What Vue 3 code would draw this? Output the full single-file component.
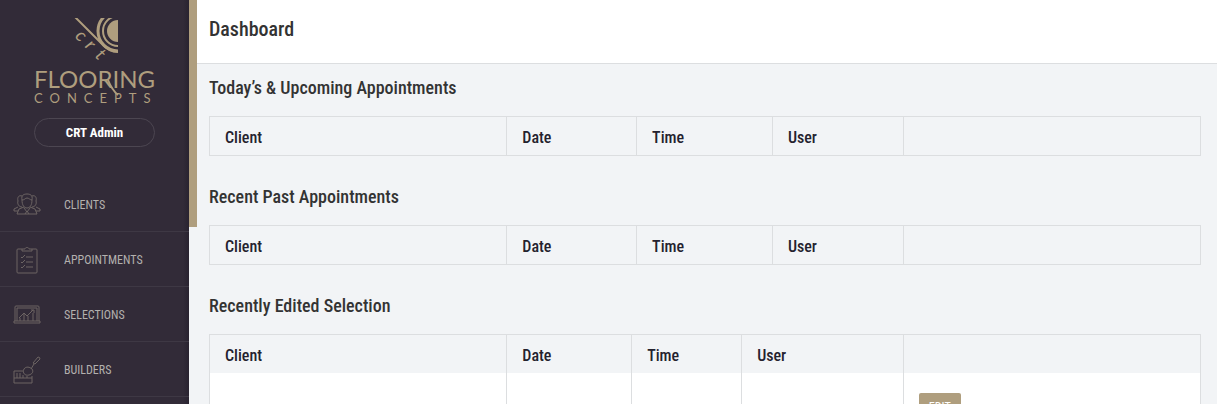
<template>
  <div class="layout">
    <aside class="sidebar">
      <div class="sidebar-body">
        <svg class="logo" viewBox="0 0 131 96" role="img" aria-label="CRT Flooring Concepts">
          <defs>
            <clipPath id="logo-clip"><rect x="40" y="5" width="49" height="40" /></clipPath>
          </defs>
          <g clip-path="url(#logo-clip)">
            <circle class="logo-fill" cx="89" cy="18" r="11" />
            <circle class="logo-ring" cx="89" cy="18" r="15" />
            <circle class="logo-ring wide" cx="89" cy="18" r="20" />
            <path class="logo-line" d="M46 4 L73 31 Q80 39 90 39" />
          </g>
          <text class="logo-crt" transform="translate(51 24) rotate(44)" x="0 13 27" y="4">crt</text>
          <text class="logo-name" x="5" y="75">FLOORING</text>
          <path class="logo-leg" d="M79 67 Q83 77 89 82" />
          <text class="logo-sub" x="5" y="90">CONCEPTS</text>
        </svg>
        <button type="button" class="account">CRT Admin</button>
        <nav class="menu">
          <a v-for="item in menu" :key="item.label" href="#" class="menu-item">
            <svg class="menu-icon" viewBox="0 0 28 28" aria-hidden="true">
              <path v-for="d in item.paths" :key="d" :d="d" />
            </svg>
            <span>{{ item.label }}</span>
          </a>
        </nav>
      </div>
      <div class="scroll-track"><div class="scroll-thumb"></div></div>
    </aside>

    <main class="content">
      <header class="page-header">
        <h1>Dashboard</h1>
      </header>
      <section v-for="section in sections" :key="section.title" class="section">
        <h2>{{ section.title }}</h2>
        <table>
          <colgroup>
            <col v-for="(width, i) in section.widths" :key="i" :style="{ width: width + '%' }">
            <col>
          </colgroup>
          <thead>
            <tr>
              <th v-for="column in columns" :key="column">{{ column }}</th>
              <th></th>
            </tr>
          </thead>
          <tbody v-if="section.rows">
            <tr v-for="row in section.rows" :key="row">
              <td v-for="column in columns" :key="column"></td>
              <td><button type="button" class="edit">EDIT</button></td>
            </tr>
          </tbody>
        </table>
      </section>
    </main>
  </div>
</template>

<script setup>
const columns = ['Client', 'Date', 'Time', 'User']

const sections = [
  { title: 'Today’s & Upcoming Appointments', widths: [30, 13.1, 13.7, 13.2] },
  { title: 'Recent Past Appointments', widths: [30, 13.1, 13.7, 13.2] },
  { title: 'Recently Edited Selection', widths: [30, 12.6, 11.1, 16.3], rows: 1 },
]

const menu = [
  {
    label: 'CLIENTS',
    paths: [
      'M9 9 C8 4 11 3 14 3 C17 3 20 4 19 9 C19 14 17 17 14 17 C11 17 9 14 9 9 Z',
      'M9 9 C12 9 12 7 14 7 C16 7 17 9 19 9',
      'M9 5 C6 4 4 6 5 10 C4 13 6 16 9 16 M19 5 C22 4 24 6 23 10 C24 13 22 16 19 16',
      'M11 16 L6 18 L4 23 H24 L22 18 L17 16 M11 17 L14 21 L17 17 M12 23 L14 20 L16 23',
      'M5 16 L1 18 V20 H5 M23 16 L27 18 V20 H23',
    ],
  },
  {
    label: 'APPOINTMENTS',
    paths: [
      'M9 3 H5 Q4 3 4 4 V26 Q4 27 5 27 H23 Q24 27 24 26 V4 Q24 3 23 3 H19',
      'M9 5 V3 H12 C12 1 16 1 16 3 H19 V5 Z',
      'M8 11 L9 12 L12 9 M13 11 H20',
      'M8 16 L9 17 L12 14 M13 16 H20',
      'M8 21 L9 22 L12 19 M13 21 H20',
    ],
  },
  {
    label: 'SELECTIONS',
    paths: [
      'M2 20 V6 Q2 5 3 5 H25 Q26 5 26 6 V20',
      'M4 20 V7 H24 V20',
      'M1 20 H27 V22 H1 Z',
      'M6 17 L11 12 L14 15 L20 9 M18 9 H21 V12',
      'M7 17 V20 M11 13 V20 M15 15 V20 M20 12 V20',
    ],
  },
  {
    label: 'BUILDERS',
    paths: [
      'M10 15 H1 V27 H19 V20 M1 22 H19',
      'M4 17 V22 M7 17 V22 M10 19 V22 M14 20 V22',
      'M11 13 C13 10 17 11 19 13 C21 16 19 18 16 19 C12 20 9 17 11 13 Z',
      'M18 13 L21 8 M20 7 L25 1 Q27 1 27 3 L22 8 Z',
    ],
  },
]
</script>

<style>
body {
  margin: 0;
  overflow: hidden;
}
</style>

<style scoped>
.layout {
  display: flex;
  height: 100vh;
  overflow: hidden;
  background: #f2f4f6;
  color: #333;
  font-family: "Roboto Condensed", Roboto, sans-serif;
}
.sidebar {
  display: flex;
  flex: none;
}
.sidebar-body {
  display: flex;
  flex-direction: column;
  align-items: center;
  width: 189px;
  padding-top: 13px;
  box-sizing: border-box;
  background: linear-gradient(to left, #292330, #322b38 6px);
}
.logo {
  flex: none;
  width: 131px;
  height: 96px;
}
.logo-line,
.logo-ring,
.logo-leg {
  fill: none;
  stroke: #af9e7e;
  stroke-width: 2;
}
.logo-ring.wide {
  stroke-width: 3;
}
.logo-fill,
.logo text {
  fill: #af9e7e;
}
.logo-crt {
  font: italic 18px Lato, sans-serif;
  text-anchor: middle;
}
.logo-name {
  font: 24px Lato, sans-serif;
}
.logo-sub {
  font: 13px Lato, sans-serif;
  letter-spacing: 7px;
}
.account {
  flex: none;
  width: 121px;
  height: 29px;
  margin-top: 9px;
  padding: 0;
  border: 1px solid #4c4651;
  border-radius: 15px;
  background: transparent;
  color: #fff;
  font: bold 13px "Roboto Condensed", Roboto, sans-serif;
}
.menu {
  align-self: stretch;
  margin-top: 30px;
}
.menu-item {
  display: flex;
  align-items: center;
  gap: 23px;
  height: 55px;
  padding: 2px 0 0 13px;
  box-sizing: border-box;
  border-bottom: 1px solid #3e3844;
  color: #b3b0ae;
  font-size: 12px;
  text-decoration: none;
}
.menu-icon {
  width: 28px;
  height: 28px;
  fill: none;
  stroke: #6c6463;
  stroke-width: 1;
}
.scroll-track {
  width: 8px;
  background: #f2f4f6;
}
.scroll-thumb {
  height: 227px;
  background: #af9e7e;
}
.content {
  flex: 1;
  min-width: 0;
}
.page-header {
  padding: 17px 12px 22px;
  border-bottom: 1px solid #dcdee0;
  background: #fff;
}
h1,
h2 {
  margin: 0;
  font-weight: 500;
  line-height: 24px;
}
h1 {
  font-size: 20px;
}
h2 {
  padding: 12px 0 16px;
  font-size: 18px;
}
.section {
  padding: 0 16px 17px 12px;
}
table {
  width: 100%;
  table-layout: fixed;
  border-collapse: collapse;
  border: 1px solid #dcdee0;
}
th,
td {
  padding: 0 15px;
  border-left: 1px solid #dcdee0;
  text-align: left;
}
th {
  height: 35px;
  padding-top: 3px;
  color: #24222e;
  font-size: 16px;
  font-weight: 500;
  line-height: 20px;
}
tbody {
  background: #fff;
}
td {
  padding-top: 20px;
  padding-bottom: 20px;
}
.edit {
  width: 42px;
  height: 28px;
  padding: 0;
  border: 0;
  border-radius: 2px;
  background: #af9e7e;
  color: #fff;
  font: 12px "Roboto Condensed", Roboto, sans-serif;
}
</style>
